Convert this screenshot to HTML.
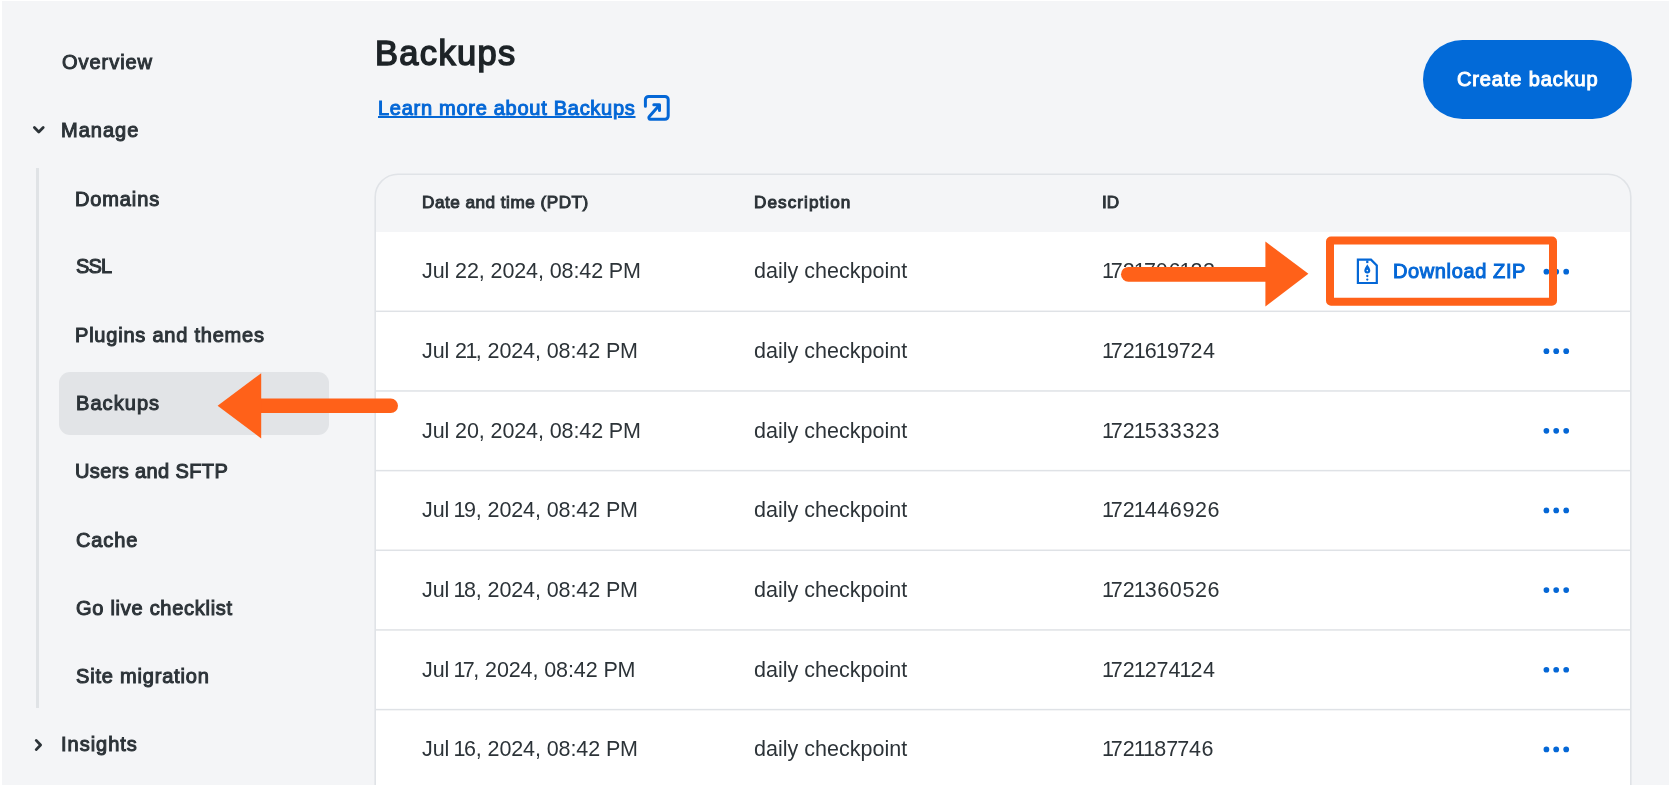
<!DOCTYPE html>
<html><head><meta charset="utf-8"><style>
html,body{margin:0;padding:0;}
body{width:1672px;height:786px;background:#fff;position:relative;overflow:hidden;font-family:"Liberation Sans",sans-serif;}
.page{position:absolute;left:2px;top:1px;width:1667px;height:784px;background:#f4f5f7;overflow:hidden;}
.abs{position:absolute;}
.t{position:absolute;white-space:nowrap;line-height:1;will-change:transform;}
.vline{position:absolute;left:36px;top:168px;width:3px;height:540px;background:#e0e3e6;}
.hl{position:absolute;left:59px;top:372px;width:270px;height:63px;border-radius:11px;background:#e2e4e7;}
.btn{position:absolute;left:1423px;top:40px;width:209px;height:79px;border-radius:40px;background:#026ad8;}
.card{position:absolute;left:375px;top:174px;width:1256px;height:700px;border-radius:22.5px;background:#fff;overflow:hidden;}
.chead{position:absolute;left:0;top:0;right:0;height:58px;background:#f4f5f7;}
</style></head><body>
<div class="page"></div>
<div class="vline"></div>
<div class="hl"></div>
<svg class="abs" style="left:0;top:0" width="1672" height="786">
  <path d="M34.4 127.6 L38.8 132 L43.2 127.6" fill="none" stroke="#2c3338" stroke-width="2.8" stroke-linecap="round" stroke-linejoin="round"/>
  <path d="M36.2 740.4 L40.6 745 L36.2 749.6" fill="none" stroke="#2c3338" stroke-width="2.8" stroke-linecap="round" stroke-linejoin="round"/>
</svg>


<svg class="abs" style="left:638px;top:90px" width="38" height="36" viewBox="0 0 38 36">
  <path d="M7.4 16.3 V9.6 a3.2 3.2 0 0 1 3.2 -3.2 H27 a3.2 3.2 0 0 1 3.2 3.2 V26.1 a3.2 3.2 0 0 1 -3.2 3.2 H12.5 a1.6 1.6 0 0 1 -1.2 -2.7 L21.3 15.2 M15.8 14.8 H21.5 V20.6" fill="none" stroke="#0467d6" stroke-width="3" stroke-linecap="round" stroke-linejoin="round"/>
</svg>
<div class="btn"></div>

<div class="card"><div class="chead"></div></div>
<svg class="abs" style="left:0;top:0" width="1672" height="786">
  <path d="M375.2 785 V197 A22.8 22.8 0 0 1 398 174.2 H1608 A22.8 22.8 0 0 1 1630.8 197 V785" fill="none" stroke="#e0e3e7" stroke-width="1.6"/>
  <rect x="376" y="310.55" width="1254" height="1.5" fill="#dfe2e6"/><rect x="376" y="390.21" width="1254" height="1.5" fill="#dfe2e6"/><rect x="376" y="469.87" width="1254" height="1.5" fill="#dfe2e6"/><rect x="376" y="549.53" width="1254" height="1.5" fill="#dfe2e6"/><rect x="376" y="629.19" width="1254" height="1.5" fill="#dfe2e6"/><rect x="376" y="708.85" width="1254" height="1.5" fill="#dfe2e6"/>
</svg>

<div class="t" style="left:421.50px;top:261.45px;font-size:21.5px;font-weight:normal;letter-spacing:-0.100px;color:#2c3338;">Jul 22, 2024, 08:42 PM</div><div class="t" style="left:754.00px;top:261.45px;font-size:21.5px;font-weight:normal;letter-spacing:0.020px;color:#2c3338;">daily checkpoint</div><div class="t" style="left:1101.50px;top:261.45px;font-size:21.5px;font-weight:normal;letter-spacing:0.600px;color:#2c3338;"><span style="letter-spacing:-3.15px">1</span><span style="letter-spacing:-0.15px">7</span><span style="letter-spacing:-0.90px">2</span><span style="letter-spacing:-1.65px">1</span><span style="letter-spacing:-0.15px">7</span>0<span style="letter-spacing:-0.90px">6</span><span style="letter-spacing:-0.90px">1</span>23</div><div class="t" style="left:421.50px;top:340.93px;font-size:21.5px;font-weight:normal;letter-spacing:-0.100px;color:#2c3338;">Jul <span style="letter-spacing:-1.60px">2</span><span style="letter-spacing:-1.60px">1</span>, 2024, 08:42 PM</div><div class="t" style="left:754.00px;top:340.93px;font-size:21.5px;font-weight:normal;letter-spacing:0.020px;color:#2c3338;">daily checkpoint</div><div class="t" style="left:1101.50px;top:340.93px;font-size:21.5px;font-weight:normal;letter-spacing:0.600px;color:#2c3338;"><span style="letter-spacing:-3.15px">1</span><span style="letter-spacing:-0.15px">7</span><span style="letter-spacing:-0.90px">2</span><span style="letter-spacing:-0.90px">1</span><span style="letter-spacing:-0.90px">6</span><span style="letter-spacing:-0.90px">1</span><span style="letter-spacing:-0.15px">9</span><span style="letter-spacing:-0.15px">7</span>24</div><div class="t" style="left:421.50px;top:420.59px;font-size:21.5px;font-weight:normal;letter-spacing:-0.100px;color:#2c3338;">Jul 20, 2024, 08:42 PM</div><div class="t" style="left:754.00px;top:420.59px;font-size:21.5px;font-weight:normal;letter-spacing:0.020px;color:#2c3338;">daily checkpoint</div><div class="t" style="left:1101.50px;top:420.59px;font-size:21.5px;font-weight:normal;letter-spacing:0.600px;color:#2c3338;"><span style="letter-spacing:-3.15px">1</span><span style="letter-spacing:-0.15px">7</span><span style="letter-spacing:-0.90px">2</span><span style="letter-spacing:-0.90px">1</span>533323</div><div class="t" style="left:421.50px;top:500.25px;font-size:21.5px;font-weight:normal;letter-spacing:-0.100px;color:#2c3338;">Jul<span style="letter-spacing:-1.60px"> </span><span style="letter-spacing:-1.60px">1</span>9, 2024, 08:42 PM</div><div class="t" style="left:754.00px;top:500.25px;font-size:21.5px;font-weight:normal;letter-spacing:0.020px;color:#2c3338;">daily checkpoint</div><div class="t" style="left:1101.50px;top:500.25px;font-size:21.5px;font-weight:normal;letter-spacing:0.600px;color:#2c3338;"><span style="letter-spacing:-3.15px">1</span><span style="letter-spacing:-0.15px">7</span><span style="letter-spacing:-0.90px">2</span><span style="letter-spacing:-0.90px">1</span>446926</div><div class="t" style="left:421.50px;top:579.91px;font-size:21.5px;font-weight:normal;letter-spacing:-0.100px;color:#2c3338;">Jul<span style="letter-spacing:-1.60px"> </span><span style="letter-spacing:-1.60px">1</span>8, 2024, 08:42 PM</div><div class="t" style="left:754.00px;top:579.91px;font-size:21.5px;font-weight:normal;letter-spacing:0.020px;color:#2c3338;">daily checkpoint</div><div class="t" style="left:1101.50px;top:579.91px;font-size:21.5px;font-weight:normal;letter-spacing:0.600px;color:#2c3338;"><span style="letter-spacing:-3.15px">1</span><span style="letter-spacing:-0.15px">7</span><span style="letter-spacing:-0.90px">2</span><span style="letter-spacing:-0.90px">1</span>360526</div><div class="t" style="left:421.50px;top:659.57px;font-size:21.5px;font-weight:normal;letter-spacing:-0.100px;color:#2c3338;">Jul<span style="letter-spacing:-1.60px"> </span><span style="letter-spacing:-2.85px">1</span><span style="letter-spacing:-1.35px">7</span>, 2024, 08:42 PM</div><div class="t" style="left:754.00px;top:659.57px;font-size:21.5px;font-weight:normal;letter-spacing:0.020px;color:#2c3338;">daily checkpoint</div><div class="t" style="left:1101.50px;top:659.57px;font-size:21.5px;font-weight:normal;letter-spacing:0.600px;color:#2c3338;"><span style="letter-spacing:-3.15px">1</span><span style="letter-spacing:-0.15px">7</span><span style="letter-spacing:-0.90px">2</span><span style="letter-spacing:-0.90px">1</span><span style="letter-spacing:-0.15px">2</span><span style="letter-spacing:-0.15px">7</span><span style="letter-spacing:-0.90px">4</span><span style="letter-spacing:-0.90px">1</span>24</div><div class="t" style="left:421.50px;top:739.23px;font-size:21.5px;font-weight:normal;letter-spacing:-0.100px;color:#2c3338;">Jul<span style="letter-spacing:-1.60px"> </span><span style="letter-spacing:-1.60px">1</span>6, 2024, 08:42 PM</div><div class="t" style="left:754.00px;top:739.23px;font-size:21.5px;font-weight:normal;letter-spacing:0.020px;color:#2c3338;">daily checkpoint</div><div class="t" style="left:1101.50px;top:739.23px;font-size:21.5px;font-weight:normal;letter-spacing:0.600px;color:#2c3338;"><span style="letter-spacing:-3.15px">1</span><span style="letter-spacing:-0.15px">7</span><span style="letter-spacing:-0.90px">2</span><span style="letter-spacing:-2.40px">1</span><span style="letter-spacing:-0.90px">1</span><span style="letter-spacing:-0.15px">8</span><span style="letter-spacing:-0.90px">7</span><span style="letter-spacing:-0.15px">7</span>46</div>
<div class="t" style="left:61.64px;top:52.19px;font-size:20.05px;font-weight:normal;letter-spacing:0.944px;color:#2c3338;-webkit-text-stroke:1.0px #2c3338;">Overview</div><div class="t" style="left:61.46px;top:120.25px;font-size:20.05px;font-weight:normal;letter-spacing:0.998px;color:#2c3338;-webkit-text-stroke:1.0px #2c3338;">Manage</div><div class="t" style="left:74.96px;top:188.52px;font-size:20.05px;font-weight:normal;letter-spacing:0.854px;color:#2c3338;-webkit-text-stroke:1.0px #2c3338;">Domains</div><div class="t" style="left:76.00px;top:256.21px;font-size:20.05px;font-weight:normal;letter-spacing:-0.808px;color:#2c3338;-webkit-text-stroke:1.0px #2c3338;">SSL</div><div class="t" style="left:75.46px;top:324.71px;font-size:20.05px;font-weight:normal;letter-spacing:0.768px;color:#2c3338;-webkit-text-stroke:1.0px #2c3338;">Plugins and themes</div><div class="t" style="left:75.69px;top:393.41px;font-size:20.05px;font-weight:normal;letter-spacing:1.048px;color:#2c3338;-webkit-text-stroke:1.0px #2c3338;">Backups</div><div class="t" style="left:75.36px;top:460.83px;font-size:20.05px;font-weight:normal;letter-spacing:0.365px;color:#2c3338;-webkit-text-stroke:1.0px #2c3338;">Users and SFTP</div><div class="t" style="left:75.56px;top:529.52px;font-size:20.05px;font-weight:normal;letter-spacing:0.848px;color:#2c3338;-webkit-text-stroke:1.0px #2c3338;">Cache</div><div class="t" style="left:75.77px;top:598.16px;font-size:20.05px;font-weight:normal;letter-spacing:0.715px;color:#2c3338;-webkit-text-stroke:1.0px #2c3338;">Go live checklist</div><div class="t" style="left:76.00px;top:665.60px;font-size:20.05px;font-weight:normal;letter-spacing:0.794px;color:#2c3338;-webkit-text-stroke:1.0px #2c3338;">Site migration</div><div class="t" style="left:61.17px;top:734.21px;font-size:20.05px;font-weight:normal;letter-spacing:0.979px;color:#2c3338;-webkit-text-stroke:1.0px #2c3338;">Insights</div><div class="t" style="left:374.81px;top:35.79px;font-size:34.42px;font-weight:normal;letter-spacing:1.364px;color:#1d2327;-webkit-text-stroke:1.5px #1d2327;">Backups</div><div class="t" style="left:377.66px;top:98.03px;font-size:20.05px;font-weight:normal;letter-spacing:0.707px;color:#0467d6;text-decoration:underline;text-decoration-thickness:1.9px;text-underline-offset:1.4px;text-decoration-skip-ink:auto;-webkit-text-stroke:1.0px #0467d6;">Learn more about Backups</div><div class="t" style="left:1457.07px;top:69.48px;font-size:20.05px;font-weight:normal;letter-spacing:0.865px;color:#fff;-webkit-text-stroke:1.0px #fff;">Create backup</div><div class="t" style="left:1392.67px;top:261.38px;font-size:20.05px;font-weight:normal;letter-spacing:0.600px;color:#0467d6;-webkit-text-stroke:1.0px #0467d6;">Download ZIP</div><div class="t" style="left:421.56px;top:194.41px;font-size:17.15px;font-weight:normal;letter-spacing:0.502px;color:#2c3338;-webkit-text-stroke:1.0px #2c3338;">Date and time (PDT)</div><div class="t" style="left:753.56px;top:194.43px;font-size:17.15px;font-weight:normal;letter-spacing:1.055px;color:#2c3338;-webkit-text-stroke:1.0px #2c3338;">Description</div><div class="t" style="left:1102.25px;top:194.48px;font-size:17.15px;font-weight:normal;letter-spacing:-0.030px;color:#2c3338;-webkit-text-stroke:1.0px #2c3338;">ID</div>
<svg class="abs" style="left:1350px;top:252px" width="36" height="38" viewBox="0 0 36 38">
  <path d="M7.9 7.7 H21 L26.8 13.5 V31 H7.9 Z" fill="none" stroke="#0467d6" stroke-width="2.2" stroke-linejoin="miter"/>
  <rect x="16.2" y="8.5" width="2.2" height="2.6" fill="#0467d6"/>
  <path d="M17.3 12.2 C18.2 14 20.3 16.6 20.3 18.6 A3 3 0 0 1 14.3 18.6 C14.3 16.6 16.4 14 17.3 12.2 Z" fill="#0467d6"/>
  <circle cx="17.3" cy="18.6" r="0.8" fill="#fff"/>
  <circle cx="17.3" cy="24" r="1.15" fill="#0467d6"/>
  <circle cx="17.3" cy="27.6" r="1.15" fill="#0467d6"/>
</svg>
<svg class="abs" style="left:0;top:0" width="1672" height="786"><circle cx="1546.4" cy="351.13" r="2.85" fill="#0467d6"/><circle cx="1556.2" cy="351.13" r="2.85" fill="#0467d6"/><circle cx="1566.2" cy="351.13" r="2.85" fill="#0467d6"/><circle cx="1546.4" cy="430.79" r="2.85" fill="#0467d6"/><circle cx="1556.2" cy="430.79" r="2.85" fill="#0467d6"/><circle cx="1566.2" cy="430.79" r="2.85" fill="#0467d6"/><circle cx="1546.4" cy="510.45" r="2.85" fill="#0467d6"/><circle cx="1556.2" cy="510.45" r="2.85" fill="#0467d6"/><circle cx="1566.2" cy="510.45" r="2.85" fill="#0467d6"/><circle cx="1546.4" cy="590.11" r="2.85" fill="#0467d6"/><circle cx="1556.2" cy="590.11" r="2.85" fill="#0467d6"/><circle cx="1566.2" cy="590.11" r="2.85" fill="#0467d6"/><circle cx="1546.4" cy="669.77" r="2.85" fill="#0467d6"/><circle cx="1556.2" cy="669.77" r="2.85" fill="#0467d6"/><circle cx="1566.2" cy="669.77" r="2.85" fill="#0467d6"/><circle cx="1546.4" cy="749.43" r="2.85" fill="#0467d6"/><circle cx="1556.2" cy="749.43" r="2.85" fill="#0467d6"/><circle cx="1566.2" cy="749.43" r="2.85" fill="#0467d6"/><circle cx="1546.4" cy="271.65" r="2.85" fill="#0467d6"/><circle cx="1556.2" cy="271.65" r="2.85" fill="#0467d6"/><circle cx="1566.2" cy="271.65" r="2.85" fill="#0467d6"/></svg>
<svg class="abs" style="left:0;top:0" width="1672" height="786">
  <path d="M390.75 405.85 H261" stroke="#ff6119" stroke-width="14.5" stroke-linecap="round"/>
  <path d="M217.6 405.8 L261.2 373.2 V438.5 Z" fill="#ff6119"/>
  <path d="M1128.4 274.3 H1266" stroke="#ff6119" stroke-width="14.8" stroke-linecap="round"/>
  <path d="M1308.4 273.8 L1265.4 241.5 V306.5 Z" fill="#ff6119"/>
  <rect x="1330" y="240.5" width="223" height="61.2" rx="1" fill="none" stroke="#ff6119" stroke-width="8"/>
</svg>
</body></html>
